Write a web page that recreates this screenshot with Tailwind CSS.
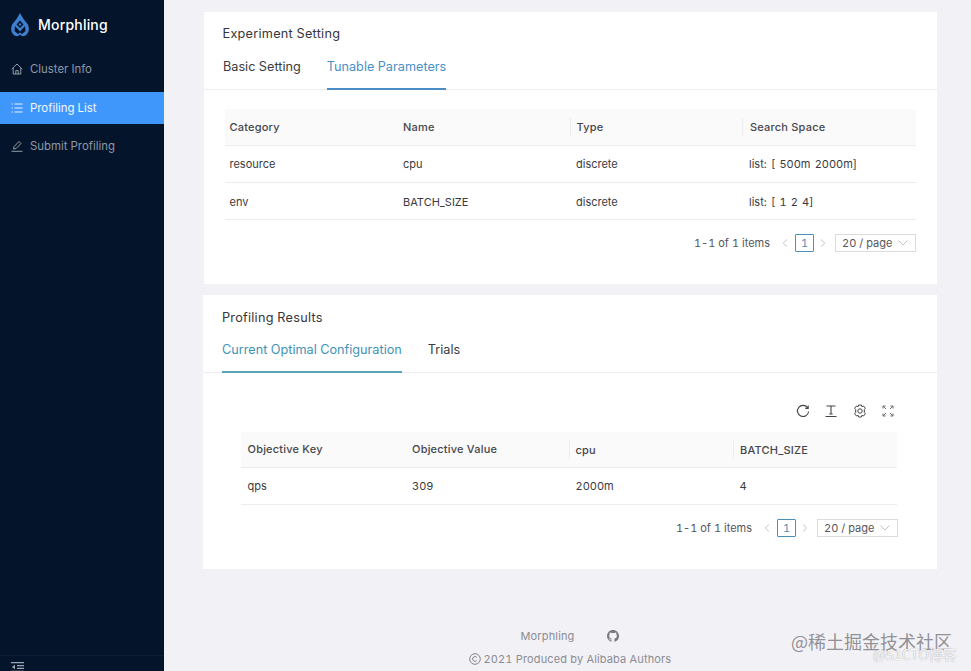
<!DOCTYPE html>
<html lang="en">
<head>
  <meta charset="UTF-8" />
  <title>Morphling</title>
  <script src="https://cdn.jsdelivr.net/npm/@tailwindcss/browser@4"></script>
</head>
<body class="bg-[#f1f1f6] font-['Inter',sans-serif] text-[#3a3a3f] tabular-nums overflow-hidden">
  <div class="relative flex w-[971px] h-[671px] overflow-hidden">
    <!-- sidebar -->
    <aside class="w-[164px] h-full shrink-0 bg-[#04142b] flex flex-col">
      <div class="h-[50px] flex items-center pl-[10px] gap-[8px]">
        <svg width="20" height="26" viewBox="0 0 20 26" fill="none">
          <path d="M10 1 L13.5 7 L17.5 12 C20 16 19 21 15.5 23.5 C13 25 11.5 24 10 22.5 C8.5 24 7 25 4.5 23.5 C1 21 0 16 2.5 12 L6.5 7 Z" fill="#3f7fd0"/>
          <path d="M10 8.5 L13.5 12.5 L10 16 L6.5 12.5 Z" fill="#04142b"/>
          <path d="M10 11 L11.4 12.5 L10 14 L8.6 12.5 Z" fill="#3f7fd0"/>
          <path d="M5 14 L10 19.5 L15 14 L15.5 19 L12 22 L10 20.5 L8 22 L4.5 19 Z" fill="#04142b"/>
        </svg>
        <span class="text-[14px] font-medium tracking-[0.2px] text-white -mt-[2px]">Morphling</span>
      </div>
      <nav class="mt-[3px] text-[11.4px]">
        <a class="h-[32px] flex items-center pl-[11px] gap-[7px] text-[#8f98a6]">
          <svg width="12" height="12" viewBox="0 0 12 12" fill="none" stroke="#a4abb6" stroke-width="0.9"><path d="M0.7 6.2 L6 1 L11.3 6.2 M2.2 5 V11 H9.8 V5 M4.8 11 V7.6 H7.2 V11"/></svg>
          <span class="pt-[2px]">Cluster Info</span>
        </a>
        <a class="h-[32px] mt-[7px] flex items-center pl-[11px] gap-[7px] bg-[#3f97fb] text-[#f2f8ff]">
          <svg width="12" height="12" viewBox="0 0 12 12" fill="none" stroke="#eaf4ff" stroke-width="1"><path d="M3.5 2 H11.5 M3.5 6 H11.5 M3.5 10 H11.5 M0.7 2 H1.9 M0.7 6 H1.9 M0.7 10 H1.9"/></svg>
          <span class="pt-[2px]">Profiling List</span>
        </a>
        <a class="h-[32px] mt-[6px] flex items-center pl-[11px] gap-[7px] text-[#8f98a6]">
          <svg width="12" height="12" viewBox="0 0 12 12" fill="none" stroke="#a4abb6" stroke-width="0.9"><path d="M0.5 11.3 H11.5 M2.5 9 L3 6.7 L8 1.5 L10 3.5 L5 8.6 Z"/></svg>
          <span class="pt-[2px]">Submit Profiling</span>
        </a>
      </nav>
      <div class="mt-auto h-[16px] border-t border-[#0d1d33] pl-[11px] pt-[6px]">
        <svg width="13" height="10" viewBox="0 0 13 10" fill="none" stroke="#9aa3af" stroke-width="1.2"><path d="M0 0.7 H13 M6 3.7 H13 M6 6.3 H13 M0 9.3 H13"/><path d="M4 2.8 L0.8 5 L4 7.2 Z" fill="#9aa3af" stroke="none"/></svg>
      </div>
    </aside>

    <!-- main -->
    <main class="flex-1 min-w-0 pl-[39.5px] pr-[34px] pt-[12px] flex flex-col">
      <!-- experiment setting -->
      <section class="bg-white h-[272px] flex flex-col">
        <h2 class="pl-[19px] pt-[14px] text-[12.7px] leading-[16px] tracking-[0.25px] text-[#35353a]">Experiment Setting</h2>
        <div class="mt-[10px] h-[38px] pl-[19.5px] flex gap-[26px] border-b border-[#eeeef0] text-[12.7px]">
          <span class="h-[38px] pt-[5px] text-[#3c3c41]">Basic Setting</span>
          <span class="h-[38px] pt-[5px] text-[#4a90c8] border-b-2 border-[#4a8cc6]">Tunable Parameters</span>
        </div>
        <div class="mt-[19px] mx-[21px]">
          <div class="grid grid-cols-[173.5px_171.5px_172.5px_1fr] h-[37px] items-center bg-[#fafafb] border-b border-[#ececee] text-[11px] font-medium tracking-[0.2px] text-[#46464b]">
            <span class="pl-[5px]">Category</span>
            <span class="pl-[5px]">Name</span>
            <span class="pl-[6px] border-l border-[#ececee] leading-[18px]">Type</span>
            <span class="pl-[7px] border-l border-[#ececee] leading-[18px]">Search Space</span>
          </div>
          <div class="grid grid-cols-[173.5px_171.5px_172.5px_1fr] h-[37px] items-center border-b border-[#ececee] text-[11px] pt-[1px]">
            <span class="pl-[5px]">resource</span>
            <span class="pl-[5px]">cpu</span>
            <span class="pl-[6.5px]">discrete</span>
            <span class="pl-[7px] [word-spacing:1.25px]">list: [ 500m 2000m]</span>
          </div>
          <div class="grid grid-cols-[173.5px_171.5px_172.5px_1fr] h-[37px] items-center border-b border-[#ececee] text-[11px] pt-[2px]">
            <span class="pl-[5px]">env</span>
            <span class="pl-[5px]">BATCH_SIZE</span>
            <span class="pl-[6.5px]">discrete</span>
            <span class="pl-[7px] [word-spacing:1.25px]">list: [ 1 2 4]</span>
          </div>
          <div class="mt-[14px] flex items-center justify-end text-[11px] text-[#56565b]">
            <span class="mr-[12px]">1-1 of 1 items</span>
            <svg width="6" height="8" viewBox="0 0 6 8" fill="none" stroke="#c4c4c8"><path d="M5 0.5 L1.2 4 L5 7.5"/></svg>
            <span class="ml-[7px] w-[19px] h-[18px] flex items-center justify-center border border-[#4a90b8] rounded-[1px] text-[#4a90b8]">1</span>
            <svg class="ml-[6px]" width="6" height="8" viewBox="0 0 6 8" fill="none" stroke="#c4c4c8"><path d="M1 0.5 L4.8 4 L1 7.5"/></svg>
            <span class="ml-[9px] w-[81px] h-[18px] flex items-center justify-between pl-[6px] pr-[7px] border border-[#dcdcdf]">20 / page
              <svg width="10" height="6" viewBox="0 0 10 6" fill="none" stroke="#c4c4c8"><path d="M0.5 0.5 L5 5 L9.5 0.5"/></svg>
            </span>
          </div>
        </div>
      </section>

      <!-- profiling results -->
      <section class="mt-[11px] -ml-px bg-white h-[274px] flex flex-col">
        <h2 class="pl-[19.5px] pt-[15px] text-[12.7px] leading-[16px] tracking-[0.25px] text-[#35353a]">Profiling Results</h2>
        <div class="mt-[9px] h-[38px] pl-[19.5px] flex gap-[26px] border-b border-[#eeeef0] text-[12.7px]">
          <span class="h-[38px] pt-[5px] text-[#3f93b8] border-b-2 border-[#5aa3b8]">Current Optimal Configuration</span>
          <span class="h-[38px] pt-[5px] text-[#3c3c41]">Trials</span>
        </div>
        <div class="mt-[31px] pr-[42px] flex justify-end gap-[14.4px]">
          <svg width="14" height="14" viewBox="0 0 14 14" fill="none" stroke="#45454a" stroke-width="1.1"><path d="M11.8 4 A5.6 5.6 0 1 0 12.6 7.5 M12.2 1.5 V4.4 H9.3"/></svg>
          <svg width="14" height="14" viewBox="0 0 14 14" fill="none" stroke="#45454a" stroke-width="1.1"><path d="M2.5 2 H11.5 M7 2 V10 M5.3 10 H8.7 M1.5 12.5 H12.5"/></svg>
          <svg width="14" height="14" viewBox="0 0 14 14" fill="none" stroke="#45454a" stroke-width="1"><path d="M5.6 1 H8.4 L8.9 2.7 L10.5 2 L12.4 4.2 L11.3 5.6 V8.4 L12.4 9.8 L10.5 12 L8.9 11.3 L8.4 13 H5.6 L5.1 11.3 L3.5 12 L1.6 9.8 L2.7 8.4 V5.6 L1.6 4.2 L3.5 2 L5.1 2.7 Z"/><circle cx="7" cy="7" r="2.2"/></svg>
          <svg width="14" height="14" viewBox="0 0 14 14" fill="none" stroke="#6a6a6f" stroke-width="1"><path d="M2 2 L5 5 M12 2 L9 5 M2 12 L5 9 M12 12 L9 9 M2 4.5 V2 H4.5 M9.5 2 H12 V4.5 M2 9.5 V12 H4.5 M9.5 12 H12 V9.5"/></svg>
        </div>
        <div class="mt-[14px] ml-[38px] mr-[40px]">
          <div class="grid grid-cols-[164px_164px_164px_1fr] h-[36px] items-center bg-[#fafafb] border-b border-[#ececee] text-[11px] font-medium tracking-[0.2px] text-[#46464b]">
            <span class="pl-[7px]">Objective Key</span>
            <span class="pl-[7.5px]">Objective Value</span>
            <span class="pl-[6px] border-l border-[#ececee] leading-[18px]">cpu</span>
            <span class="pl-[6.5px] border-l border-[#ececee] leading-[18px]">BATCH_SIZE</span>
          </div>
          <div class="grid grid-cols-[164px_164px_164px_1fr] h-[37px] items-center border-b border-[#ececee] text-[11px]">
            <span class="pl-[7px]">qps</span>
            <span class="pl-[7.5px]">309</span>
            <span class="pl-[7px]">2000m</span>
            <span class="pl-[7px]">4</span>
          </div>
          <div class="mt-[14px] -mr-px flex items-center justify-end text-[11px] text-[#56565b]">
            <span class="mr-[12px]">1-1 of 1 items</span>
            <svg width="6" height="8" viewBox="0 0 6 8" fill="none" stroke="#c4c4c8"><path d="M5 0.5 L1.2 4 L5 7.5"/></svg>
            <span class="ml-[7px] w-[19px] h-[18px] flex items-center justify-center border border-[#4a90b8] rounded-[1px] text-[#4a90b8]">1</span>
            <svg class="ml-[6px]" width="6" height="8" viewBox="0 0 6 8" fill="none" stroke="#c4c4c8"><path d="M1 0.5 L4.8 4 L1 7.5"/></svg>
            <span class="ml-[9px] w-[81px] h-[18px] flex items-center justify-between pl-[6px] pr-[7px] border border-[#dcdcdf]">20 / page
              <svg width="10" height="6" viewBox="0 0 10 6" fill="none" stroke="#c4c4c8"><path d="M0.5 0.5 L5 5 L9.5 0.5"/></svg>
            </span>
          </div>
        </div>
      </section>

      <!-- footer -->
      <footer class="mt-[60px] text-[11px] text-[#8c8c92] tracking-[0.15px]">
        <div class="pl-[317px] flex items-center gap-[32px] h-[14px]">
          <span>Morphling</span>
          <svg width="12" height="12" viewBox="0 0 16 16" fill="#77777d"><path d="M8 0C3.58 0 0 3.58 0 8c0 3.54 2.29 6.53 5.47 7.59.4.07.55-.17.55-.38 0-.19-.01-.82-.01-1.49-2.01.37-2.53-.49-2.69-.94-.09-.23-.48-.94-.82-1.13-.28-.15-.68-.52-.01-.53.63-.01 1.08.58 1.23.82.72 1.21 1.87.87 2.33.66.07-.52.28-.87.51-1.07-1.78-.2-3.64-.89-3.64-3.95 0-.87.31-1.59.82-2.15-.08-.2-.36-1.02.08-2.12 0 0 .67-.21 2.2.82.64-.18 1.32-.27 2-.27s1.36.09 2 .27c1.53-1.04 2.2-.82 2.2-.82.44 1.1.16 1.92.08 2.12.51.56.82 1.27.82 2.15 0 3.07-1.87 3.75-3.65 3.95.29.25.54.73.54 1.48 0 1.07-.01 1.93-.01 2.2 0 .21.15.46.55.38A8.01 8.01 0 0 0 16 8c0-4.42-3.58-8-8-8z"/></svg>
        </div>
        <div class="pl-[265px] mt-[9px] flex items-center gap-[3px] h-[14px]">
          <svg width="12" height="12" viewBox="0 0 12 12" fill="none" stroke="#77777d" stroke-width="0.9"><circle cx="6" cy="6" r="5.3"/><path d="M7.8 4.4 A2.4 2.4 0 1 0 7.8 7.6"/></svg>
          <span>2021 Produced by Alibaba Authors</span>
        </div>
      </footer>
    </main>

    <!-- watermark -->
    <div class="absolute left-[791px] top-[630px] text-[18px] leading-[22px] text-[#77777d]/80 font-['Noto_Sans_CJK_SC','Liberation_Sans',sans-serif]">@稀土掘金技术社区</div>
    <div class="absolute left-[873px] top-[646px] text-[14px] leading-[17px] text-white/90 [text-shadow:0_0_1px_#8a8a90] font-['Noto_Sans_CJK_SC','Liberation_Sans',sans-serif]">@51CTO博客</div>
  </div>
</body>
</html>
